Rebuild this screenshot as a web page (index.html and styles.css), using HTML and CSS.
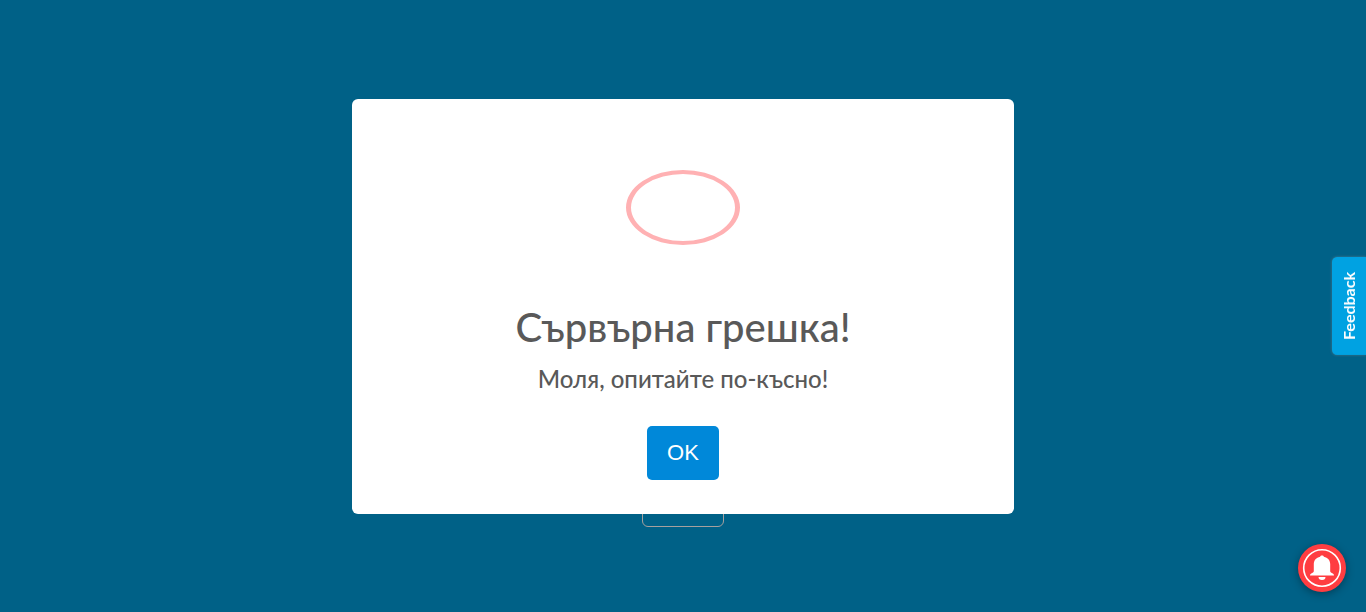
FILE: index.html
```html
<!DOCTYPE html>
<html lang="bg">
<head>
<meta charset="utf-8">
<meta name="viewport" content="width=device-width, initial-scale=1">
<title>Сървърна грешка!</title>
<link rel="stylesheet" href="styles.css">
</head>
<body>
<main class="overlay">
  <div class="stack">
    <section class="dialog" role="alertdialog" aria-labelledby="dialog-title" aria-describedby="dialog-text">
      <div class="error-mark"></div>
      <h1 class="title" id="dialog-title">Сървърна грешка!</h1>
      <p class="message" id="dialog-text">Моля, опитайте по-късно!</p>
      <button class="confirm" type="button">OK</button>
    </section>
    <div class="backdrop-box"></div>
  </div>
</main>
<button class="feedback" type="button">Feedback</button>
<button class="bell" type="button" aria-label="Notifications">
  <svg viewBox="0 0 48 48" width="48" height="48" aria-hidden="true">
    <circle cx="24" cy="24" r="18.3" fill="none" stroke="#fff" stroke-width="1.6"/>
    <path fill="#fff" d="M24 11.600c1 0 1.700.4 1.900 1.100 3.900.8 6.300 3.400 6.300 7.300v7c0 1 .7 1.700 2.100 2.300 1.200.6 1.700 1.300 1.700 2.200H12c0-.9.500-1.600 1.700-2.200 1.400-.6 2.100-1.300 2.100-2.300v-7c0-3.900 2.400-6.500 6.300-7.300.2-.7.900-1.100 1.900-1.100z"/>
    <path fill="#fff" d="M20.500 33h7a3.500 3 0 0 1-7 0z"/>
  </svg>
</button>
</body>
</html>
```
FILE: styles.css
```css
* {
  box-sizing: border-box;
}

body {
  margin: 0;
  background: #006187;
  color: #595959;
  font-family: Lato, "Open Sans", sans-serif;
}

.overlay {
  display: flex;
  min-height: 100vh;
  align-items: center;
  justify-content: center;
}

.stack {
  position: relative;
  width: 662px;
  max-width: 94%;
}

.dialog {
  position: relative;
  z-index: 1;
  display: flex;
  flex-direction: column;
  align-items: center;
  padding: 71px 32px 34px;
  border-radius: 6px;
  background: #fff;
}

.error-mark {
  width: 114px;
  height: 75px;
  border: solid #ffb1b3;
  border-width: 4px 5px;
  border-radius: 50%;
}

.title {
  margin: 58px 0 0;
  font-size: 40px;
  font-weight: 500;
  line-height: 48px;
  text-align: center;
}

.message {
  margin: 12px 0 0;
  font-size: 24px;
  font-weight: 500;
  line-height: 32px;
  text-align: center;
}

.confirm {
  margin-top: 31px;
  padding: 12px 20px;
  border: 0;
  border-radius: 5px;
  background: #0088d9;
  color: #fff;
  font: 22px/30px "Liberation Sans", Arial, sans-serif;
}

.backdrop-box {
  position: absolute;
  bottom: -13px;
  left: 50%;
  width: 82px;
  height: 40px;
  margin-left: -41px;
  border: 1px solid #a6a09e;
  border-radius: 6px;
}

.feedback {
  position: fixed;
  top: 50%;
  right: 0;
  padding: 15px 6px;
  border: 0;
  border-radius: 0 5px 5px 0;
  background: #00a2e2;
  box-shadow: 0 0 3px #4c7585;
  color: #fff;
  font: 700 16px/22px Lato, sans-serif;
  writing-mode: vertical-rl;
  transform: translateY(-50%) rotate(180deg);
}

.bell {
  position: fixed;
  right: 20px;
  bottom: 20px;
  width: 48px;
  height: 48px;
  padding: 0;
  border: 0;
  border-radius: 50%;
  background: #ff3d41;
  box-shadow: 0 2px 8px rgba(0, 0, 0, 0.35);
}

.bell svg {
  display: block;
}
```
